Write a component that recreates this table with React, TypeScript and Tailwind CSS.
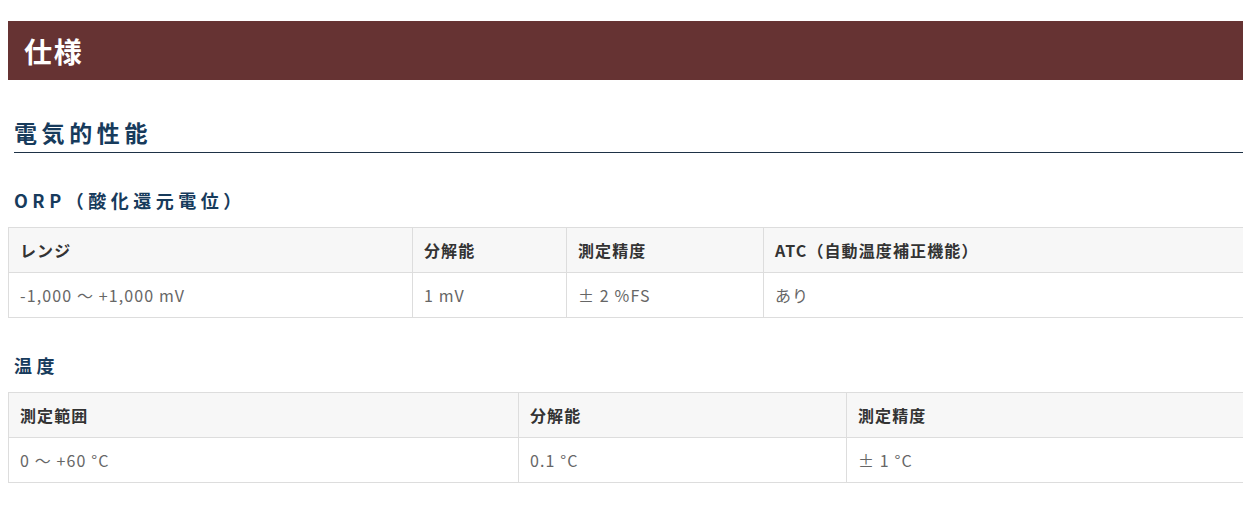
import React from "react";

const font = { fontFamily: '"Noto Sans CJK JP", "Noto Sans", sans-serif' };

function SpecTable({ widths, head, body }: { widths: number[]; head: string[]; body: string[] }) {
  return (
    <table className="border-collapse table-fixed w-[1250px]">
      <colgroup>
        {widths.map((w, i) => (
          <col key={i} style={{ width: w }} />
        ))}
      </colgroup>
      <thead>
        <tr className="h-[45px] bg-[#f7f7f7]">
          {head.map((h, i) => (
            <th
              key={i}
              className="border border-[#dddddd] px-[11px] text-left text-[16px] font-bold tracking-[0.07em] text-[#333333] align-middle"
            >
              {h}
            </th>
          ))}
        </tr>
      </thead>
      <tbody>
        <tr className="h-[45px] bg-white">
          {body.map((b, i) => (
            <td
              key={i}
              className="border border-[#dddddd] px-[11px] text-left text-[16px] font-normal tracking-[0.07em] text-[#666666] align-middle"
            >
              {b}
            </td>
          ))}
        </tr>
      </tbody>
    </table>
  );
}

export default function App() {
  return (
    <div className="w-full overflow-hidden bg-white min-h-[521px]" style={font}>
      <div className="w-[1260px] pl-[8px]">
        <div className="mt-[21px] h-[59px] bg-[#663333] flex items-center pl-[16px]">
          <h1 className="text-white text-[28px] font-bold tracking-[0.06em] leading-none">仕様</h1>
        </div>

        <div className="ml-[6px] mt-[37px] border-b border-[#1e3246] pb-[5px]">
          <h2 className="text-[23px] leading-[30px] font-bold text-[#173b5c] tracking-[0.2em]">電気的性能</h2>
        </div>

        <h3 className="ml-[6px] mt-[33px] text-[18px] leading-[28px] font-bold text-[#173b5c] tracking-[0.25em]">
          ORP（酸化還元電位）
        </h3>
        <div className="mt-[13px]">
          <SpecTable
            widths={[404, 154, 197, 495]}
            head={["レンジ", "分解能", "測定精度", "ATC（自動温度補正機能）"]}
            body={["-1,000 ～ +1,000 mV", "1 mV", "± 2 %FS", "あり"]}
          />
        </div>

        <h3 className="ml-[6px] mt-[33px] text-[18px] leading-[28px] font-bold text-[#173b5c] tracking-[0.25em]">
          温度
        </h3>
        <div className="mt-[13px]">
          <SpecTable
            widths={[510, 328, 412]}
            head={["測定範囲", "分解能", "測定精度"]}
            body={["0 ～ +60 °C", "0.1 °C", "± 1 °C"]}
          />
        </div>
      </div>
    </div>
  );
}
